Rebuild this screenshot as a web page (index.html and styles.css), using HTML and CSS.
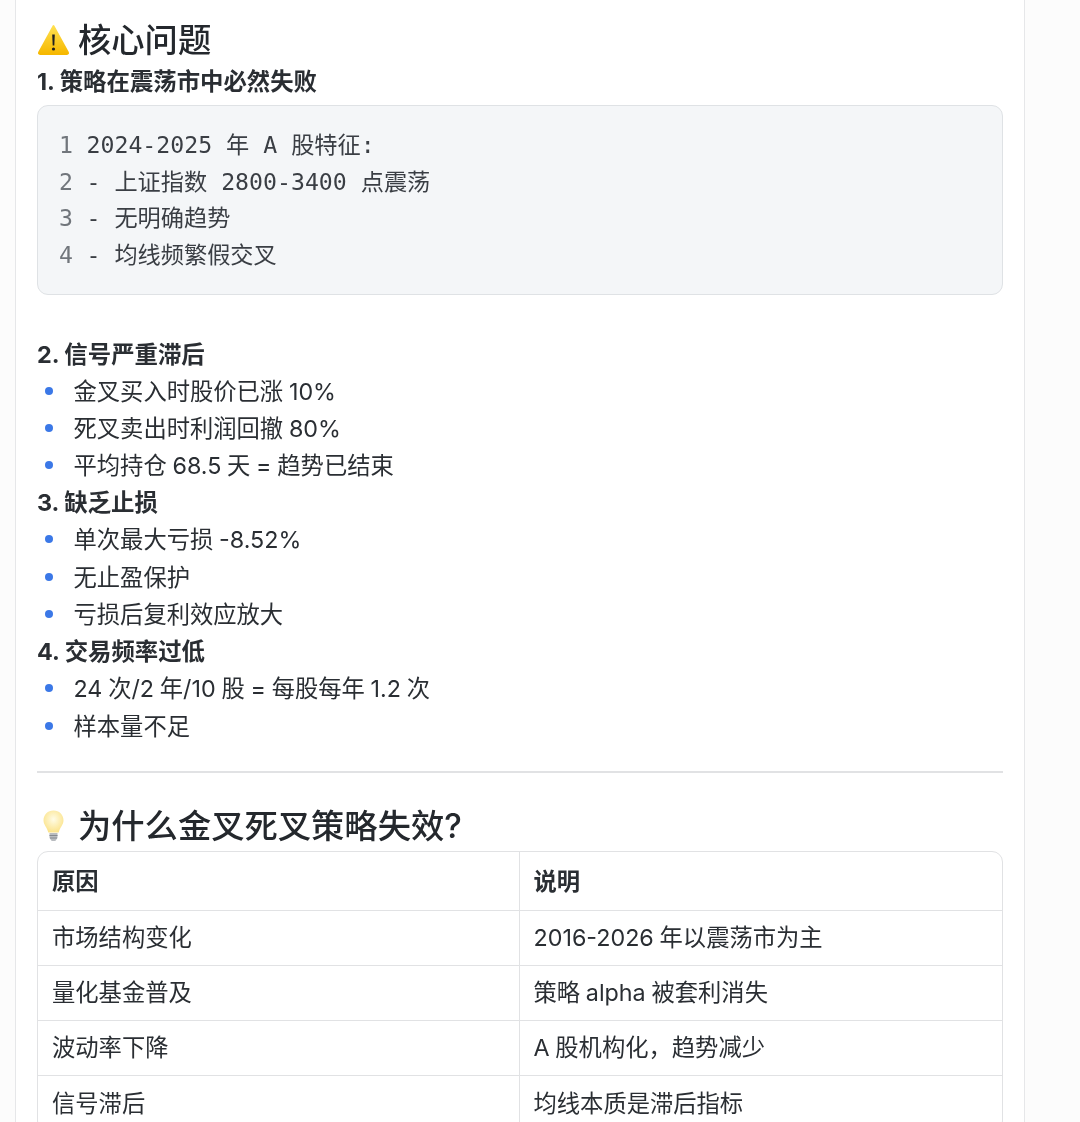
FILE: index.html
```html
<!DOCTYPE html>
<html lang="zh-CN">
<head>
<meta charset="utf-8">
<title>核心问题</title>
<link rel="stylesheet" href="styles.css">
</head>
<body>
<main class="doc">
  <h2 class="h2 first">
    <svg class="emoji" viewBox="0 0 33 33" aria-hidden="true"><defs><linearGradient id="w" x1="0" y1="0" x2="0" y2="1"><stop offset="0" stop-color="#ffe04f"/><stop offset="1" stop-color="#f6b800"/></linearGradient></defs><path d="M16.500 2 L31 28.500 Q31.500 30 30 30 L3 30 Q1.500 30 2 28.500 Z" fill="url(#w)" stroke="url(#w)" stroke-width="1.800" stroke-linejoin="round"/><path d="M15.200 10.500h2.600l-.5 11h-1.600z" fill="#1f1f1f"/><circle cx="16.500" cy="25" r="1.600" fill="#1f1f1f"/></svg>
    <span>核心问题</span>
  </h2>
  <h3 class="h3 lead">1. 策略在震荡市中必然失败</h3>
  <pre class="code"><span class="line"><span class="ln">1</span>2024-2025 年 A 股特征:</span>
<span class="line"><span class="ln">2</span>- 上证指数 2800-3400 点震荡</span>
<span class="line"><span class="ln">3</span>- 无明确趋势</span>
<span class="line"><span class="ln">4</span>- 均线频繁假交叉</span></pre>
  <h3 class="h3 after-code">2. 信号严重滞后</h3>
  <ul class="list">
    <li>金叉买入时股价已涨 10%</li>
    <li>死叉卖出时利润回撤 80%</li>
    <li>平均持仓 68.5 天 = 趋势已结束</li>
  </ul>
  <h3 class="h3">3. 缺乏止损</h3>
  <ul class="list">
    <li>单次最大亏损 -8.52%</li>
    <li>无止盈保护</li>
    <li>亏损后复利效应放大</li>
  </ul>
  <h3 class="h3">4. 交易频率过低</h3>
  <ul class="list">
    <li>24 次/2 年/10 股 = 每股每年 1.2 次</li>
    <li>样本量不足</li>
  </ul>
  <hr class="rule">
  <h2 class="h2">
    <svg class="emoji" viewBox="0 0 33 33" aria-hidden="true"><defs><radialGradient id="b" cx=".5" cy=".4" r=".6"><stop offset="0" stop-color="#fffce6"/><stop offset="1" stop-color="#fbe38a"/></radialGradient></defs><path d="M16.500 1.500c5.600 0 10 4.200 10 9.800 0 4.600-3.600 7.200-4.800 12.200h-10.400c-1.200-5-4.800-7.600-4.800-12.200 0-5.600 4.400-9.800 10-9.800z" fill="url(#b)"/><path d="M12.500 24h8v5l-2.200 3h-3.600l-2.200-3z" fill="#b9bcc0"/><path d="M12.500 26.500h8M13 29h7" stroke="#85898f" stroke-width="1"/></svg>
    <span>为什么金叉死叉策略失效?</span>
  </h2>
  <div class="table-wrap">
    <table class="table">
      <thead><tr><th>原因</th><th>说明</th></tr></thead>
      <tbody>
        <tr><td>市场结构变化</td><td>2016-2026 年以震荡市为主</td></tr>
        <tr><td>量化基金普及</td><td>策略 alpha 被套利消失</td></tr>
        <tr><td>波动率下降</td><td>A 股机构化&#xFF0C;趋势减少</td></tr>
        <tr><td>信号滞后</td><td>均线本质是滞后指标</td></tr>
      </tbody>
    </table>
  </div>
</main>
</body>
</html>
```

FILE: styles.css
```css
html, body {
  margin: 0;
  height: 1122px;
  overflow: hidden;
  background: #fcfcfc;
}
body {
  font-family: Inter, "Noto Sans CJK SC", sans-serif;
  color: #2a2e33;
  font-size: 23.3px;
  word-spacing: -0.8px;
}
.doc {
  box-sizing: border-box;
  width: 1010px;
  margin-left: 15px;
  min-height: 1400px;
  padding: 0 21px;
  background: #fff;
  border-left: 1.5px solid #e6e7e9;
  border-right: 1.5px solid #e6e7e9;
  filter: blur(0.35px);
}
.h2 {
  display: flex;
  align-items: center;
  gap: 8px;
  margin: 0;
  height: 48px;
  font-size: 33.3px;
  font-weight: 500;
  line-height: 48px;
  color: #24282d;
}
.h2.first { padding-top: 16px; }
.emoji { width: 33px; height: 33px; flex: none; }
.h3 {
  margin: 0;
  height: 37px;
  font-size: 23.4px;
  font-weight: 700;
  line-height: 37px;
  color: #2a2e33;
  word-spacing: 0;
}
.h3.lead { margin-top: -1px; }
.h3.after-code { margin-top: 40.5px; }
.code {
  margin: 5px 0 0;
  padding: 21px 21px 21px;
  height: 190px;
  box-sizing: border-box;
  background: #f4f6f8;
  border: 1.5px solid #dfe2e5;
  border-radius: 11px;
  font-family: "DejaVu Sans Mono", "Noto Sans CJK SC", monospace;
  font-size: 23.2px;
  line-height: 36.6px;
  color: #3a3e44;
  word-spacing: 0;
}
.line { display: inline-block; height: 36.6px; }
.ln {
  display: inline-block;
  width: 27.5px;
  color: #71767c;
}
.list {
  margin: 0;
  padding: 0;
  list-style: none;
}
.list li {
  position: relative;
  height: 37.3px;
  padding-left: 36.5px;
  line-height: 37.3px;
}
.list li::before {
  content: "";
  position: absolute;
  left: 7.5px;
  top: 14px;
  width: 8px;
  height: 8px;
  border-radius: 50%;
  background: #3b78e7;
}
.rule {
  margin: 26.5px 0 0;
  height: 1.5px;
  border: 0;
  background: #e1e2e4;
}
.rule + .h2 { margin-top: 29px; }
.table-wrap {
  margin-top: 1px;
  border: 1.5px solid #e1e2e4;
  border-radius: 11px;
  overflow: hidden;
}
.table {
  width: 100%;
  table-layout: fixed;
  border-collapse: collapse;
}
.table th, .table td {
  padding: 0 14px 4px;
  height: 55px;
  box-sizing: border-box;
  text-align: left;
  border-top: 1.5px solid #e1e2e4;
  border-left: 1.5px solid #e1e2e4;
}
.table th { height: 59px; padding-bottom: 2px; font-weight: 700; border-top: 0; }
.table th:first-child, .table td:first-child { border-left: 0; width: 481px; }
```
